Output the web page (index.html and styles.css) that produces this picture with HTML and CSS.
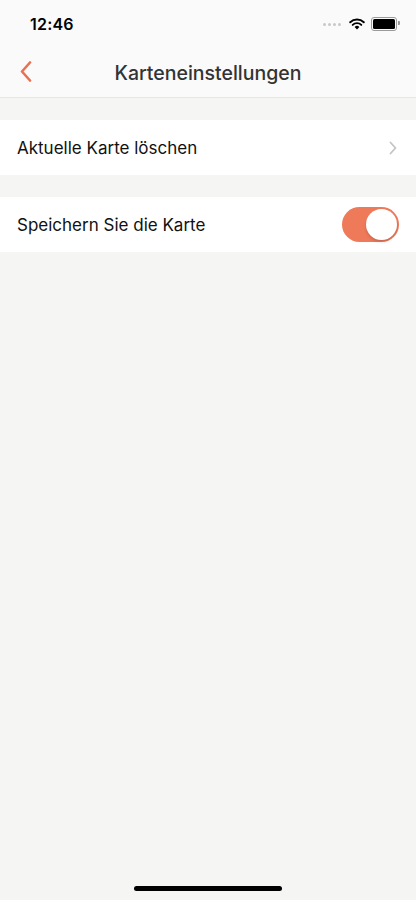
FILE: index.html
```html
<!DOCTYPE html>
<html lang="de">
<head>
  <meta charset="UTF-8">
  <title>Karteneinstellungen</title>
  <link rel="stylesheet" href="styles.css">
</head>
<body>

  <div class="screen">
    <div class="status">
      <span class="time">12:46</span>
      <div class="status-icons">
        <span class="dots"><i></i><i></i><i></i><i></i></span>
        <svg class="wifi" width="16" height="12" viewBox="0 0 16 12">
          <path d="M8 11.5 L5.6 8.9 A3.4 3.4 0 0 1 10.4 8.9 Z" fill="#000"/>
          <path d="M3.7 6.9 A6.2 6.2 0 0 1 12.3 6.9" stroke="#000" stroke-width="1.9" fill="none" stroke-linecap="round"/>
          <path d="M1.2 4.3 A9.8 9.8 0 0 1 14.8 4.3" stroke="#000" stroke-width="1.9" fill="none" stroke-linecap="round"/>
        </svg>
        <span class="battery"><span class="level"></span></span>
      </div>
    </div>

    <div class="navbar">
      <svg class="back" width="12" height="21" viewBox="0 0 12 21">
        <path d="M10 1.5 L2 10.5 L10 19.5" stroke="#e9714f" stroke-width="2.6" fill="none" stroke-linecap="round" stroke-linejoin="round"/>
      </svg>
      <h1>Karteneinstellungen</h1>
    </div>

    <div class="group">
      <div class="row">
        <span>Aktuelle Karte löschen</span>
        <svg class="chevron" width="8" height="14" viewBox="0 0 8 14">
          <path d="M1.5 1.5 L6.5 7 L1.5 12.5" stroke="#c4c4c8" stroke-width="1.8" fill="none" stroke-linecap="round" stroke-linejoin="round"/>
        </svg>
      </div>
    </div>

    <div class="group">
      <div class="row">
        <span>Speichern Sie die Karte</span>
        <div class="switch on"><div class="knob"></div></div>
      </div>
    </div>

    <div class="home-bar"></div>
  </div>

</body>
</html>
```

FILE: styles.css
```css
body {
  margin: 0;
  font-family: Inter, "Noto Sans", sans-serif;
  background-color: #f5f5f3;
}

.screen {
  position: relative;
  height: 900px;
  overflow: hidden;
}

.status {
  height: 48px;
  background: #fafafa;
  display: flex;
  justify-content: space-between;
  align-items: center;
  padding: 0 16px 0 30px;
}

.time {
  font-size: 16px;
  font-weight: 600;
  color: #000;
  letter-spacing: 0.2px;
}

.status-icons {
  display: flex;
  align-items: center;
  gap: 6px;
}

.dots {
  display: flex;
  gap: 2px;
  margin-right: 2px;
}

.dots i {
  width: 3px;
  height: 3px;
  border-radius: 50%;
  background: #c8c8c8;
}

.battery {
  position: relative;
  width: 22px;
  height: 10px;
  border: 1px solid #9a9a9a;
  border-radius: 3px;
  padding: 1px;
  margin-right: 3px;
}

.battery::after {
  content: "";
  position: absolute;
  right: -4px;
  top: 3px;
  width: 2px;
  height: 4px;
  border-radius: 0 1px 1px 0;
  background: #9a9a9a;
}

.battery .level {
  display: block;
  height: 100%;
  background: #000;
  border-radius: 1.5px;
}

.navbar {
  height: 49px;
  background: #fafafa;
  border-bottom: 1px solid #e6e6e6;
  display: flex;
  align-items: center;
  justify-content: center;
  position: relative;
}

.back {
  position: absolute;
  left: 20px;
  top: 13px;
}

.navbar h1 {
  margin: 0;
  font-size: 19.5px;
  font-weight: 500;
  color: #333;
}

.group {
  margin-top: 22px;
  background: #fff;
}

.group:first-of-type {
  margin-top: 23px;
}

.row {
  height: 55px;
  display: flex;
  align-items: center;
  justify-content: space-between;
  padding: 0 17px;
  font-size: 17px;
  color: #111;
}

.chevron {
  margin-right: 2px;
}

.switch {
  width: 57px;
  height: 35px;
  border-radius: 18px;
  background: #e8e8e8;
  position: relative;
}

.switch.on {
  background: #ee7a5a;
}

.knob {
  position: absolute;
  top: 2px;
  right: 2px;
  width: 31px;
  height: 31px;
  border-radius: 50%;
  background: #fff;
  box-shadow: 0 2px 3px rgba(0,0,0,0.15);
}

.home-bar {
  position: absolute;
  left: 134px;
  bottom: 9px;
  width: 148px;
  height: 5px;
  border-radius: 3px;
  background: #000;
}
```
